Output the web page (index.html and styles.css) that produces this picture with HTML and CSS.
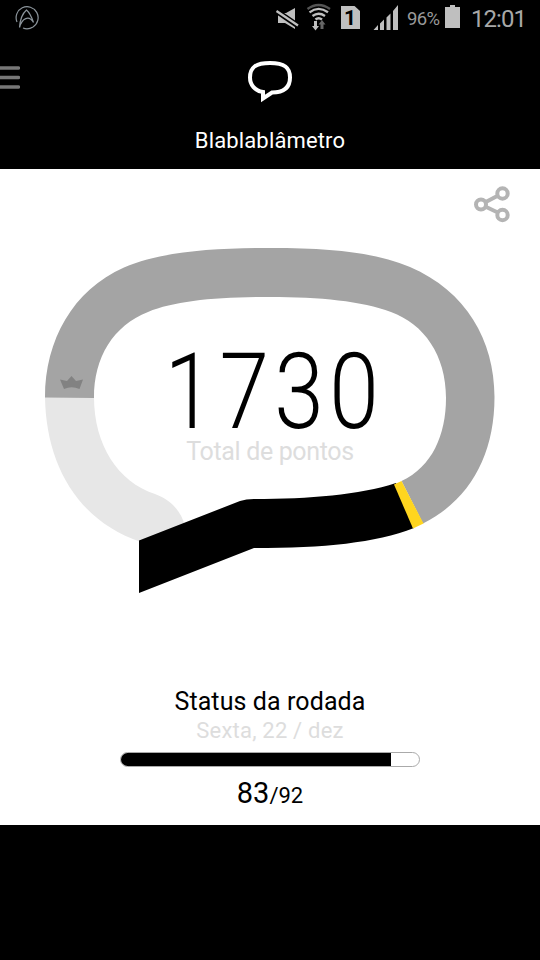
FILE: index.html
```
<!DOCTYPE html>
<html lang="pt-BR">
<head>
    <meta charset="UTF-8">
    <title>Blablablâmetro</title>
    <link rel="stylesheet" href="styles.css">
</head>
<body>
    <div class="status-bar">
        <svg class="app-icon" width="24" height="24" viewBox="0 0 24 24">
            <path d="M2 16 A11 11 0 1 1 18 21 Q13 24 8 22"/>
            <path d="M4.500 21.500 C5 14 8 7 11.500 4 C15 7 17 12 18.500 16.500 C14 9 7 12 4.500 21.500"/>
        </svg>
        <div class="status-icons">
            <svg width="264" height="34" viewBox="270 0 264 34">
                <g fill="#bfbfbf">
                    <path d="M278 13 H286 L295 8 V29 L285 23 H278 Z"/>
                    <path d="M341 6 H354.500 L360 11 V29 H341 Z"/>
                    <path d="M373.500 30 L378 25 V30 Z M380 23.500 L384 19.500 V30 H380 Z M386.500 17.500 L390.500 13.500 V30 H386.500 Z M393 11 L398 5 V30 H393 Z"/>
                    <path d="M450 5 H455 V7 H460 V28 H445 V7 H450 Z"/>
                    <path d="M314 21 H317 V26 H319 L315.500 30.500 L312 26 H314 Z"/>
                </g>
                <path fill="#666" d="M320.500 29 V24.500 H318.500 L322 20 L325.500 24.500 H323.500 V29 Z"/>
                <g fill="none">
                    <path stroke="#000" stroke-width="5.500" d="M275 10 L299 26.500"/>
                    <path stroke="#bfbfbf" stroke-width="2.300" d="M276.500 11 L298 25.500"/>
                    <path stroke="#555" stroke-width="2.300" d="M307.500 9 Q318.500 1 330 9"/>
                    <path stroke="#bfbfbf" stroke-width="2.300" d="M309.500 12.300 Q318.500 5.500 328 12.300 M312.500 16 Q318.500 11.500 325 16"/>
                    <path stroke="#bfbfbf" stroke-width="2.500" d="M315.500 19.500 Q318.500 17 322 19.500"/>
                </g>
                <text class="sim" x="350" y="25">1</text>
                <text class="battery" x="407" y="25" textLength="33">96%</text>
                <text class="clock" x="471" y="27" textLength="56">12:01</text>
            </svg>
        </div>
    </div>

    <div class="header">
        <svg class="menu" width="20" height="24" viewBox="0 0 20 24">
            <path d="M-3 3 H18.500 M-3 12.500 H18.500 M-3 22 H18.500"/>
        </svg>
        <svg class="logo" width="48" height="44" viewBox="0 0 48 44">
            <path d="M24 4 C9.500 4 4 8.500 4 18.500 C4 26 9 32 17 33 V39.500 L26 33.500 C37 33.500 44 29 44 18.500 C44 8.500 38.500 4 24 4 Z"/>
        </svg>
        <h1>Blablablâmetro</h1>
    </div>

    <div class="content">
        <svg class="share" width="38" height="38" viewBox="0 0 38 38">
            <path d="M8 19.500 L30 8 M8 19.500 L30 30"/>
            <circle cx="8" cy="19.500" r="5"/>
            <circle cx="29.500" cy="8.500" r="5.200"/>
            <circle cx="29.500" cy="30" r="5.200"/>
        </svg>

        <div class="meter">
            <svg width="460" height="360" viewBox="40 240 460 360">
                <path fill="#e7e7e7" d="M45 397 C46 465 78 521 141 542 L185 526 C181 511 171 500 155 494 C118 482 94 445 94 397 Z"/>
                <path fill="#a4a4a4" d="M45 397.500 C45 340 73 290 124 267.500 C160 252 210 248 270 248 C340 248 378 254 410 267 C466 291 494.500 340 494.500 397 C494.500 455 470 500 423 523.500 L401.500 481 C432 467 446 435 446 398 C446 355 424 324 391 312 C362 301 320 297 270 297 C215 297 175 301 148 312 C113 326 94 357 94 398 Z"/>
                <path d="M139 540.500 L240 501 Q246 499 254 499 C310 499 359 495 396 483 L414 528 C375 543 325 548 254 548 L139 593 Z"/>
                <path fill="#ffd51f" d="M394 484.500 L401.500 481 L423.500 523.500 L413 528.500 Z"/>
                <path fill="#828282" d="M60 379.500 L67 381 L71.500 376 L76 381 L83 379.500 L79.500 389 Q71.500 385.500 64 389 Z"/>
            </svg>
            <div class="total">
                <span class="points">1730</span>
                <span class="label">Total de pontos</span>
            </div>
        </div>

        <div class="round">
            <h2>Status da rodada</h2>
            <p class="date">Sexta, 22 / dez</p>
            <div class="bar"><div class="fill" style="width:90.5%"></div></div>
            <p class="score">83<small>/92</small></p>
        </div>
    </div>
</body>
</html>
```
FILE: styles.css
```
*{
    box-sizing: border-box;
}
body{
    margin: 0;
    height: 960px;
    background: #000;
    font-family: Roboto, "Liberation Sans", sans-serif;
    overflow: hidden;
}
h1, h2, p{
    margin: 0;
    font-weight: 400;
    white-space: nowrap;
}
svg{
    display: block;
}
.status-bar{
    height: 38px;
    padding: 0 6px 0 15px;
    display: flex;
    justify-content: space-between;
}
.app-icon{
    margin-top: 6px;
    fill: none;
    stroke: #8c959c;
    stroke-width: 1.200;
}
.sim{
    font-size: 21px;
    font-weight: 700;
    text-anchor: middle;
    fill: #000;
}
.battery{
    font-size: 18.500px;
    fill: #999;
}
.clock{
    font-size: 24px;
    fill: #a8a8a8;
}
.header{
    height: 131px;
    display: grid;
    grid-template-columns: 20px 1fr 20px;
    grid-template-rows: 84px 1fr;
    justify-items: center;
    color: #fff;
}
.menu{
    margin-top: 27px;
    fill: none;
    stroke: #777;
    stroke-width: 3.500;
    stroke-linecap: round;
}
.logo{
    margin-top: 21px;
    fill: none;
    stroke: #fff;
    stroke-width: 4;
}
h1{
    grid-column: 1 / 4;
    font-size: 22px;
    line-height: 38px;
    letter-spacing: 0.150px;
}
.content{
    height: 656px;
    background: #fff;
    display: flex;
    flex-direction: column;
    align-items: center;
}
.share{
    align-self: flex-end;
    margin: 16px 29px 17px 0;
    fill: #fff;
    stroke: #b4b4b4;
    stroke-width: 4;
}
.meter{
    display: grid;
}
.meter > *{
    grid-area: 1 / 1;
}
.total{
    display: flex;
    flex-direction: column;
    align-items: center;
    padding-top: 103px;
}
.points{
    padding-left: 10px;
    font-size: 105px;
    font-weight: 300;
    line-height: 100px;
    letter-spacing: 6.300px;
    transform: scaleX(0.85);
}
.label{
    margin-top: -6px;
    font-size: 25px;
    line-height: 30px;
    letter-spacing: -0.350px;
    color: #ddd;
}
.round{
    width: 300px;
    padding-top: 87px;
    display: flex;
    flex-direction: column;
    align-items: center;
}
h2{
    font-size: 25px;
    line-height: 30px;
    letter-spacing: 0.100px;
}
.date{
    font-size: 22px;
    line-height: 28px;
    letter-spacing: 0.200px;
    color: #ddd;
}
.bar{
    width: 300px;
    height: 15px;
    margin-top: 7px;
    border: 1px solid #aaa;
    border-radius: 8px;
    overflow: hidden;
}
.fill{
    height: 100%;
    background: #000;
}
.score{
    font-size: 29px;
    line-height: 52px;
}
.score small{
    font-size: 22px;
}
```
